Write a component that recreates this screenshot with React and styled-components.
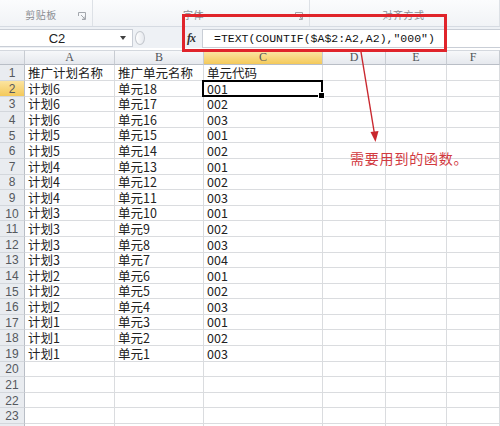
import { Fragment } from "react";
import styled, { createGlobalStyle } from "styled-components";

const GlobalStyle = createGlobalStyle`
  html, body {
    margin: 0;
    padding: 0;
    background: #ffffff;
    overflow: hidden;
  }
  body {
    font-family: "Noto Sans CJK SC", "Liberation Sans", sans-serif;
  }
`;

const CJK = `"Noto Sans CJK SC", "Liberation Sans", sans-serif`;

const Page = styled.div`
  position: relative;
  width: 500px;
  height: 426px;
  overflow: hidden;
  display: flex;
  flex-direction: column;
`;

/* ribbon: only the group caption strip is in view */
const Ribbon = styled.div`
  height: 27px;
  flex: none;
  display: flex;
  background: linear-gradient(#fbfcfd, #f1f3f6);
  border-bottom: 1px solid #d6dbe2;
  box-sizing: border-box;
`;

const Group = styled.div`
  width: ${(p) => p.$width}px;
  flex: none;
  position: relative;
  display: flex;
  align-items: center;
  justify-content: center;
  padding-top: 2px;
  box-sizing: border-box;
  border-right: 1px solid #dde1e6;
`;

const GroupLabel = styled.span`
  font-family: ${CJK};
  font-size: 10px;
  color: #8a8d92;
  letter-spacing: 0.5px;
  margin-left: ${(p) => p.$shift || 0}px;
`;

const Launcher = styled.svg`
  position: absolute;
  right: 6px;
  top: 12px;
`;

const FormulaBar = styled.div`
  height: 21px;
  flex: none;
  display: flex;
  align-items: center;
  background: #eef1f5;
  box-sizing: border-box;
  padding-top: 1px;
`;

const NameBox = styled.div`
  width: 133px;
  height: 18px;
  flex: none;
  display: flex;
  align-items: center;
  background: #ffffff;
  border: 1px solid #c9ced6;
  border-left: none;
  box-sizing: border-box;
  font-family: "Liberation Sans", sans-serif;
  font-size: 13px;
  color: #222;
`;

const NameText = styled.span`
  flex: 1;
  text-align: center;
  padding-right: 6px;
`;

const Caret = styled.span`
  width: 0;
  height: 0;
  margin-right: 6px;
  border-left: 3.5px solid transparent;
  border-right: 3.5px solid transparent;
  border-top: 4px solid #404040;
`;

const Grip = styled.div`
  width: 10px;
  height: 14px;
  margin-left: 2px;
  border-radius: 50%;
  border: 1px solid #c4c8ce;
  background: linear-gradient(90deg, #ffffff, #e6e9ee);
  box-sizing: border-box;
`;

const FxButton = styled.div`
  width: 14px;
  margin-left: 42px;
  font-family: "Liberation Serif", serif;
  font-style: italic;
  font-weight: bold;
  font-size: 12px;
  color: #333;
  letter-spacing: -1px;
`;

const FormulaInput = styled.div`
  flex: 1;
  height: 19px;
  margin-left: 1px;
  display: flex;
  align-items: center;
  padding-left: 11px;
  background: #ffffff;
  border: 1px solid #c9ced6;
  border-right: none;
  box-sizing: border-box;
  font-family: "Liberation Mono", monospace;
  font-size: 11.5px;
  color: #111;
  white-space: pre;
`;

const Sheet = styled.div`
  flex: 1;
  display: grid;
  grid-template-columns: 25px 90px 89px 119px 63px 61px 1fr;
  grid-template-rows: 15.4px;
  grid-auto-rows: 15.6px;
  margin-top: 2px;
`;

const ColHead = styled.div`
  display: flex;
  align-items: center;
  justify-content: center;
  box-sizing: border-box;
  border-right: 1px solid #c8ccd2;
  border-bottom: 1px solid #b9bec6;
  border-top: 1px solid #d4d8de;
  background: ${(p) =>
    p.$active
      ? "linear-gradient(#fbe6a6, #f4c95a)"
      : "linear-gradient(#f7f8fa, #e6e9ee)"};
  font-family: "Liberation Serif", serif;
  font-size: 12px;
  color: #505458;
`;

const Corner = styled(ColHead)`
  background: linear-gradient(#f2f4f7, #e3e6eb);
`;

const RowHead = styled.div`
  display: flex;
  align-items: center;
  justify-content: center;
  box-sizing: border-box;
  border-right: 1px solid #b9bec6;
  border-bottom: 1px solid #d3d7dc;
  background: ${(p) =>
    p.$active ? "linear-gradient(#fbe4a0, #f4c95a)" : "#e9ecf0"};
  font-family: "Liberation Sans", sans-serif;
  font-size: 12px;
  color: #55595e;
  padding-top: 1px;
`;

const Cell = styled.div`
  position: relative;
  display: flex;
  align-items: flex-end;
  box-sizing: border-box;
  border-right: 1px solid #dadcdf;
  border-bottom: 1px solid #dadcdf;
  padding: 0 0 0 3px;
  font-family: ${CJK};
  font-size: 12.5px;
  line-height: 15px;
  color: #222;
  white-space: nowrap;

  ${(p) =>
    p.$active &&
    `
    &::after {
      content: "";
      position: absolute;
      left: -2px;
      top: -1px;
      right: -1px;
      bottom: -1px;
      border: 2px solid #000;
    }
    &::before {
      content: "";
      position: absolute;
      right: -3px;
      bottom: -3px;
      width: 5px;
      height: 5px;
      background: #000;
      border: 1px solid #fff;
      z-index: 1;
    }
  `}
`;

/* red call-out over the formula bar */
const Highlight = styled.div`
  position: absolute;
  left: 182px;
  top: 14px;
  width: 265px;
  height: 38px;
  border: 3px solid #e0242b;
  box-sizing: border-box;
`;

const Arrow = styled.svg`
  position: absolute;
  left: 350px;
  top: 50px;
`;

const Note = styled.div`
  position: absolute;
  left: 350px;
  top: 148px;
  font-family: ${CJK};
  font-size: 14px;
  letter-spacing: 0.8px;
  color: #d23a3f;
`;

const columns = ["A", "B", "C", "D", "E", "F"];

const rows = [
  ["推广计划名称", "推广单元名称", "单元代码"],
  ["计划6", "单元18", "001"],
  ["计划6", "单元17", "002"],
  ["计划6", "单元16", "003"],
  ["计划5", "单元15", "001"],
  ["计划5", "单元14", "002"],
  ["计划4", "单元13", "001"],
  ["计划4", "单元12", "002"],
  ["计划4", "单元11", "003"],
  ["计划3", "单元10", "001"],
  ["计划3", "单元9", "002"],
  ["计划3", "单元8", "003"],
  ["计划3", "单元7", "004"],
  ["计划2", "单元6", "001"],
  ["计划2", "单元5", "002"],
  ["计划2", "单元4", "003"],
  ["计划1", "单元3", "001"],
  ["计划1", "单元2", "002"],
  ["计划1", "单元1", "003"],
  [],
  [],
  [],
  [],
  [],
];

const LauncherIcon = () => (
  <Launcher width="8" height="8" viewBox="0 0 8 8">
    <path d="M0.5 4V0.5H7.5V7.5H4" fill="none" stroke="#a3a7ad" />
    <path d="M3 3L7 7M7 4.5V7H4.5" fill="none" stroke="#a3a7ad" />
  </Launcher>
);

function App() {
  return (
    <>
      <GlobalStyle />
      <Page>
        <Ribbon>
          <Group $width={93}>
            <GroupLabel $shift={-10}>剪贴板</GroupLabel>
            <LauncherIcon />
          </Group>
          <Group $width={217}>
            <GroupLabel $shift={-15}>字体</GroupLabel>
            <LauncherIcon />
          </Group>
          <Group $width={190}>
            <GroupLabel $shift={-2}>对齐方式</GroupLabel>
          </Group>
        </Ribbon>

        <FormulaBar>
          <NameBox>
            <NameText>C2</NameText>
            <Caret />
          </NameBox>
          <Grip />
          <FxButton>fx</FxButton>
          <FormulaInput>=TEXT(COUNTIF($A$2:A2,A2),"000")</FormulaInput>
        </FormulaBar>

        <Sheet>
          <Corner />
          {columns.map((c) => (
            <ColHead key={c} $active={c === "C"}>
              {c}
            </ColHead>
          ))}
          {rows.map((r, i) => (
            <Fragment key={i}>
              <RowHead $active={i === 1}>{i + 1}</RowHead>
              {columns.map((c, j) => (
                <Cell key={c} $active={i === 1 && j === 2}>
                  {r[j] || ""}
                </Cell>
              ))}
            </Fragment>
          ))}
        </Sheet>

        <Highlight />
        <Arrow width="40" height="96" viewBox="0 0 40 96">
          <path d="M11 2L24.5 84" stroke="#c9272e" strokeWidth="1.4" fill="none" />
          <path d="M20.5 82L28.5 81L25.5 92Z" fill="#c9272e" />
        </Arrow>
        <Note>需要用到的函数。</Note>
      </Page>
    </>
  );
}

export default App;
